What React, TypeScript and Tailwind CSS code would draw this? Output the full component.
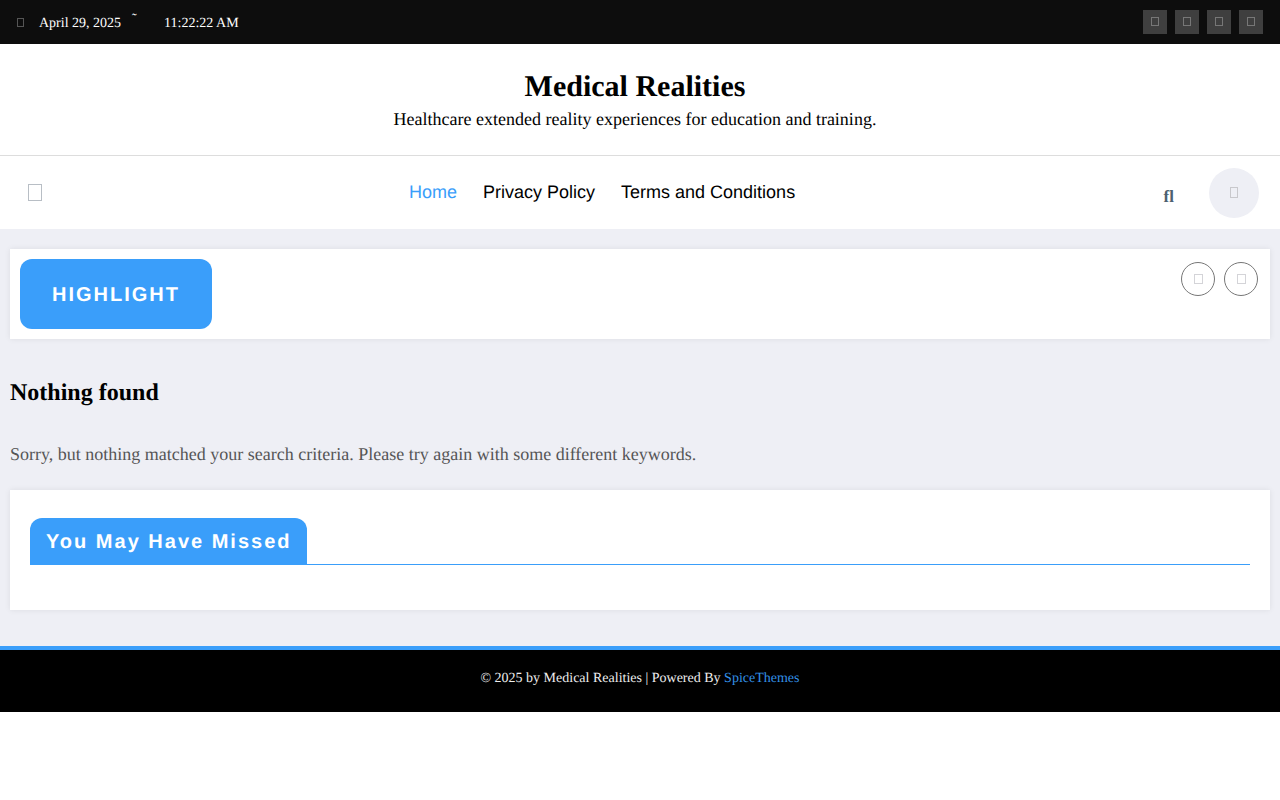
import React from 'react';

const serif = "font-['Liberation_Serif',serif]";
const sans = "font-['Liberation_Sans',sans-serif]";

const TopBar = () => (
  <div className={`h-11 bg-[#0d0d0d] flex items-center justify-between pl-[17px] pr-[17px] text-white ${serif}`}>
    <div className="flex items-center text-[14px] [text-rendering:geometricPrecision]">
      <span className="w-[7px] h-[9px] border border-[#555] mr-[15px]" />
      <span className="mt-[2px]">April 29, 2025</span>
      <span className="relative ml-[11px] w-[32px] text-[14px] -top-[3px]">˜</span>
      <span className="mt-[2px]">11:22:22 AM</span>
    </div>
    <div className="flex gap-2">
      {[0, 1, 2, 3].map(i => (
        <span key={i} className="w-6 h-6 bg-[#3f3f3f] flex items-center justify-center">
          <span className="w-[8px] h-[9px] border border-[#777] -mt-[1px]" />
        </span>
      ))}
    </div>
  </div>
);

const SiteTitle = () => (
  <div className={`h-[112px] border-b border-[#dddddd] bg-white flex flex-col items-center pt-[23px] pr-[10px] text-black [text-rendering:geometricPrecision] ${serif}`}>
    <h1 className="text-[30px] leading-[39px] font-bold">Medical Realities</h1>
    <p className="text-[18px] leading-[26px]">Healthcare extended reality experiences for education and training.</p>
  </div>
);

const Nav = () => (
  <div className="h-[73px] bg-white flex items-center pl-7 pr-[21px]">
    <span className="w-[14px] h-[17px] border border-[#b8bec5]" />
    <nav className={`flex gap-[26px] ml-[367px] text-[18px] text-black [text-rendering:geometricPrecision] ${sans}`}>
      <a className="text-[#3a9efa]">Home</a>
      <a>Privacy Policy</a>
      <a>Terms and Conditions</a>
    </nav>
    <span className={`ml-auto mt-[8px] mr-[35px] text-[17px] font-bold text-[#4d6070] ${serif}`}>fl</span>
    <span className="w-[50px] h-[50px] rounded-full bg-[#eeeff5] flex items-center justify-center">
      <span className="w-[8px] h-[11px] border border-[#c8c8cc] -mt-[1px]" />
    </span>
  </div>
);

const Highlight = () => (
  <div className="h-[90px] bg-white shadow-[0_0_6px_rgba(0,0,0,0.08)] p-[10px] flex justify-between">
    <div className={`w-[192px] h-[70px] rounded-xl bg-[#3a9efa] text-white flex items-center justify-center pt-[2px] text-[20px] font-bold tracking-[2px] [text-rendering:geometricPrecision] ${sans}`}>HIGHLIGHT</div>
    <div className="flex gap-[9px] mt-[3px] mr-[2px]">
      {[0, 1].map(i => (
        <span key={i} className="w-[34px] h-[34px] rounded-full border border-[#777] flex items-center justify-center">
          <span className="w-[9px] h-[10px] border border-[#d4d4d8]" />
        </span>
      ))}
    </div>
  </div>
);

const Missed = () => (
  <div className="h-[120px] mt-[23px] bg-white shadow-[0_0_6px_rgba(0,0,0,0.08)] px-5 pt-7">
    <div className="border-b border-[#3a9efa] h-[47px]">
      <h2 className={`inline-block h-[47px] rounded-t-xl bg-[#3a9efa] px-4 text-white text-[20px] leading-[48px] font-bold tracking-[2px] [text-rendering:geometricPrecision] ${sans}`}>You May Have Missed</h2>
    </div>
  </div>
);

const Footer = () => (
  <div className={`h-[66px] border-t-4 border-[#3a9efa] bg-black text-[#eeeeee] text-[14px] flex items-center justify-center pb-[6px] [text-rendering:geometricPrecision] ${serif}`}>
    <span>© 2025 by Medical Realities | Powered By <a className="text-[#3391e6]">SpiceThemes</a></span>
  </div>
);

export default function App() {
  return (
    <div className="min-h-[800px] bg-white">
      <TopBar />
      <SiteTitle />
      <Nav />
      <main className="bg-[#eeeff5] pt-5 px-[10px] h-[417px]">
        <Highlight />
        <h3 className={`mt-[39px] text-[24px] leading-[30px] font-bold text-black [text-rendering:geometricPrecision] ${serif}`}>Nothing found</h3>
        <p className={`mt-[33px] text-[18px] leading-[26px] text-[#555555] [text-rendering:geometricPrecision] ${serif}`}>Sorry, but nothing matched your search criteria. Please try again with some different keywords.</p>
        <Missed />
      </main>
      <Footer />
    </div>
  );
}
